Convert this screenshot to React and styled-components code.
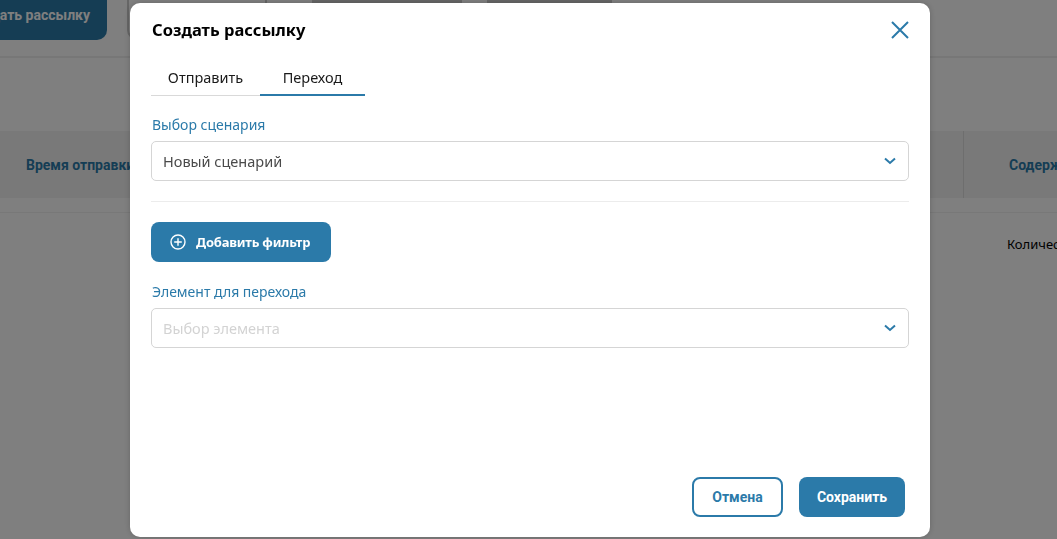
import React from "react";
import styled, { createGlobalStyle } from "styled-components";

const Global = createGlobalStyle`
  html, body { margin: 0; padding: 0; height: 100%; overflow: hidden; background: #fff; }
  * { box-sizing: border-box; }
`;

const Page = styled.div`
  width: 1057px;
  height: 539px;
  overflow: hidden;
  background: #fff;
  font-family: "Noto Sans", sans-serif;
`;

const Toolbar = styled.div`
  display: flex;
  height: 58px;
  margin-left: -60px;
  margin-top: -10px;
  padding-top: 0;
  gap: 20px;
  align-items: flex-start;
  border-bottom: 2px solid #eeeeee;
  height: 68px;
`;

const BgPrimary = styled.div`
  width: 167px;
  height: 50px;
  background: #2b7aa9;
  border-radius: 10px;
  color: #fff;
  font: 700 14px/50px Roboto, sans-serif;
  text-align: right;
  padding-right: 17px;
  white-space: nowrap;
`;

const BgOutline = styled.div`
  width: ${p => p.$w}px;
  height: 50px;
  margin-left: ${p => p.$ml || 0}px;
  background: ${p => p.$fill || "#fff"};
  border: 2px solid #cccccc;
  border-radius: 10px;
`;

const TableHead = styled.div`
  margin-top: 73px;
  height: 67px;
  display: flex;
  background: #f3f3f3;
  align-items: center;
  border-bottom: 0;
`;

const HeadCell = styled.div`
  font: 700 14px/20px Roboto, sans-serif;
  color: #2b7aa9;
  white-space: nowrap;
  padding-left: ${p => p.$pl}px;
  width: ${p => p.$w}px;
  height: 100%;
  display: flex;
  align-items: center;
  border-left: ${p => (p.$divider ? "1px solid #dcdcdc" : "none")};
`;

const TableRow = styled.div`
  margin-top: 14px;
  border-top: 1px solid #f0f0f0;
  height: 64px;
  display: flex;
  justify-content: flex-end;
  align-items: center;
`;

const RowText = styled.div`
  width: 50px;
  font: 400 13px/18px "Noto Sans", sans-serif;
  color: #000;
  white-space: nowrap;
  overflow: hidden;
  margin-top: -2px;
`;

const Overlay = styled.div`
  position: fixed;
  inset: 0;
  background: rgba(0, 0, 0, 0.5);
  display: flex;
  justify-content: center;
  padding: 3px 127px 2px 130px;
`;

const Modal = styled.div`
  width: 800px;
  height: 534px;
  background: #fff;
  border-radius: 10px;
  padding: 17px 21px 20px 21px;
  display: flex;
  flex-direction: column;
  box-shadow: 0 0 6px rgba(0, 0, 0, 0.2);
`;

const Header = styled.div`
  display: flex;
  justify-content: space-between;
  align-items: center;
  height: 20px;
  padding-left: 1px;
`;

const Title = styled.h2`
  margin: 0;
  font: 700 16.5px/20px "Noto Sans", sans-serif;
  color: #000;
`;

const Close = styled.button`
  border: 0;
  background: none;
  padding: 0;
  width: 18px;
  height: 18px;
  display: block;
  margin: 0 0 0 0;
  color: #2b7aa9;
`;

const Tabs = styled.div`
  display: flex;
  margin-top: 19px;
  width: 214px;
  height: 37px;
  border-bottom: 1px solid #d9d9d9;
`;

const Tab = styled.div`
  width: ${p => p.$w}px;
  height: 37px;
  text-align: center;
  font: 400 14.5px/36px "Noto Sans", sans-serif;
  color: #1a1a1a;
  border-bottom: ${p => (p.$active ? "2px solid #2b7aa9" : "1px solid transparent")};
`;

const Label = styled.div`
  font: 400 14px/20px "Noto Sans", sans-serif;
  color: #2b7aa9;
  padding-left: 1px;
  margin-top: ${p => p.$mt}px;
  margin-bottom: 6px;
`;

const Select = styled.div`
  height: 40px;
  width: 758px;
  border: 1px solid #d5d5d5;
  border-radius: 5px;
  padding: 0 12px 0 11px;
  display: flex;
  justify-content: space-between;
  align-items: center;
  font: 400 14.5px/20px "Noto Sans", sans-serif;
  color: ${p => (p.$placeholder ? "#d3d3d3" : "#4a4a4a")};
`;

const Rule = styled.div`
  height: 1px;
  width: 758px;
  background: #ececec;
  margin-top: 20px;
`;

const AddButton = styled.button`
  margin-top: 20px;
  width: 180px;
  height: 40px;
  background: #2b7aa9;
  border: 0;
  border-radius: 8px;
  color: #fff;
  font: 700 13px/20px "Noto Sans", sans-serif;
  letter-spacing: -0.2px;
  display: flex;
  align-items: center;
  gap: 10px;
  padding: 0 0 0 19px;
`;

const Footer = styled.div`
  margin-top: auto;
  display: flex;
  justify-content: flex-end;
  gap: 16px;
  padding-right: 4px;
`;

const FooterButton = styled.button`
  height: 40px;
  width: ${p => p.$w}px;
  border-radius: 8px;
  font: 700 14px/20px Roboto, sans-serif;
  padding: 0;
  background: ${p => (p.$primary ? "#2b7aa9" : "#fff")};
  color: ${p => (p.$primary ? "#fff" : "#2b7aa9")};
  border: ${p => (p.$primary ? "0" : "2px solid #2b7aa9")};
`;

const Chevron = () => (
  <svg width="12" height="8" viewBox="0 0 12 8" fill="none" aria-hidden="true">
    <path d="M1 1.5 L6 6 L11 1.5" stroke="#2b7aa9" strokeWidth="2" />
  </svg>
);

export default function App() {
  return (
    <>
      <Global />
      <Page>
        <Toolbar>
          <BgPrimary>Создать рассылку</BgPrimary>
          <BgOutline $w={140} />
          <BgOutline $w={150} $ml={25} $fill="#cccccc" />
          <BgOutline $w={125} $ml={5} $fill="#cccccc" />
        </Toolbar>
        <TableHead>
          <HeadCell $w={963} $pl={26}>Время отправки</HeadCell>
          <HeadCell $w={94} $pl={45} $divider>Содержание</HeadCell>
        </TableHead>
        <TableRow>
          <RowText>Количество</RowText>
        </TableRow>
      </Page>
      <Overlay>
        <Modal>
          <Header>
            <Title>Создать рассылку</Title>
            <Close aria-label="Закрыть">
              <svg width="18" height="18" viewBox="0 0 18 18" fill="none">
                <path d="M1 1 L17 17 M17 1 L1 17" stroke="currentColor" strokeWidth="2" />
              </svg>
            </Close>
          </Header>
          <Tabs>
            <Tab $w={109}>Отправить</Tab>
            <Tab $w={105} $active>Переход</Tab>
          </Tabs>
          <Label $mt={19}>Выбор сценария</Label>
          <Select>
            Новый сценарий
            <Chevron />
          </Select>
          <Rule />
          <AddButton>
            <svg width="16" height="16" viewBox="0 0 16 16" fill="none">
              <circle cx="8" cy="8" r="7" stroke="#fff" strokeWidth="1.4" />
              <path d="M8 4.2 V11.8 M4.2 8 H11.8" stroke="#fff" strokeWidth="1.4" />
            </svg>
            Добавить фильтр
          </AddButton>
          <Label $mt={20}>Элемент для перехода</Label>
          <Select $placeholder>
            Выбор элемента
            <Chevron />
          </Select>
          <Footer>
            <FooterButton $w={91}>Отмена</FooterButton>
            <FooterButton $w={106} $primary>Сохранить</FooterButton>
          </Footer>
        </Modal>
      </Overlay>
    </>
  );
}
